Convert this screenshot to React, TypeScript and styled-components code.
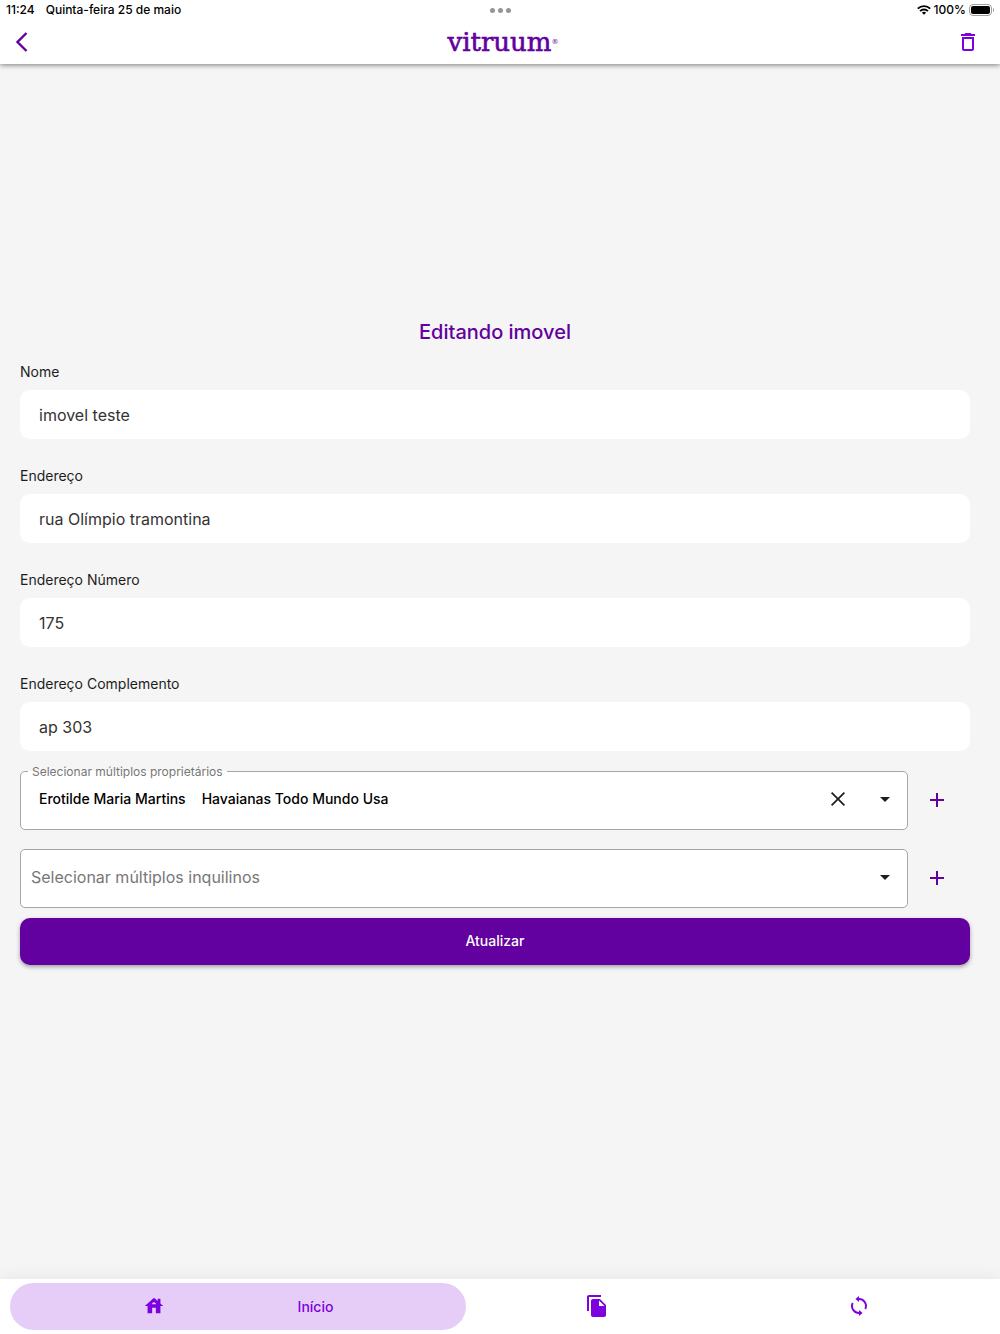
import React, { useState } from 'react';
import styled, { createGlobalStyle } from 'styled-components';

const purple = '#6200a0';
const violet = '#7d00de';

const Global = createGlobalStyle`
  *, *::before, *::after { box-sizing: border-box; }
  body { margin: 0; background: #f5f5f5; }
  body, button, input { font-family: Inter, "Liberation Sans", sans-serif; }
`;

const Page = styled.div`
  display: flex;
  flex-direction: column;
  min-height: 100vh;
  color: #1d1d1d;
`;

const Header = styled.header`
  background: #fff;
  box-shadow: 0 1px 5px rgba(0, 0, 0, 0.5);
`;

const StatusBar = styled.div`
  display: grid;
  grid-template-columns: 1fr auto 1fr;
  align-items: center;
  height: 20px;
  padding: 0 6px;
  font-size: 12px;
  font-weight: 500;
  line-height: 20px;
  color: #000;
`;

const StatusGroup = styled.div<{ $gap: number; $end?: boolean }>`
  display: flex;
  align-items: center;
  justify-content: ${(p) => (p.$end ? 'flex-end' : 'flex-start')};
  gap: ${(p) => p.$gap}px;
`;

const Dots = styled.div`
  display: flex;
  gap: 3px;
`;

const Dot = styled.span`
  width: 5px;
  height: 5px;
  border-radius: 50%;
  background: #969696;
`;

const Toolbar = styled.div`
  display: grid;
  grid-template-columns: 1fr auto 1fr;
  align-items: center;
  height: 44px;
  padding: 0 20px 0 10px;
`;

const IconButton = styled.button<{ $color?: string; $end?: boolean }>`
  display: flex;
  align-items: center;
  justify-content: center;
  justify-self: ${(p) => (p.$end ? 'end' : 'start')};
  width: 24px;
  height: 24px;
  padding: 0;
  border: 0;
  background: none;
  color: ${(p) => p.$color ?? purple};
  cursor: pointer;
`;

const Brand = styled.div`
  display: flex;
  align-items: center;
  padding-left: 16px;
  font-family: "DejaVu Serif", serif;
  font-size: 26px;
  line-height: 40px;
  color: ${purple};
  -webkit-text-stroke: 0.6px ${purple};
`;

const Registered = styled.span`
  font-size: 7px;
  line-height: 8px;
  -webkit-text-stroke: 0;
`;

const Main = styled.main`
  display: flex;
  flex: 1;
  flex-direction: column;
  justify-content: center;
  padding: 0 30px 59px 20px;
`;

const Form = styled.form`
  display: flex;
  flex-direction: column;
`;

const Title = styled.h1`
  margin: 0 0 18px;
  font-size: 20px;
  font-weight: 500;
  line-height: 24px;
  text-align: center;
  color: ${purple};
`;

const Fields = styled.div`
  display: flex;
  flex-direction: column;
  gap: 27px;
  margin-bottom: 20px;
`;

const Field = styled.div`
  display: flex;
  flex-direction: column;
  gap: 9px;
`;

const Label = styled.label`
  font-size: 14px;
  line-height: 19px;
`;

const TextInput = styled.input`
  width: 100%;
  height: 49px;
  padding: 1px 19px 0;
  border: 0;
  border-radius: 10px;
  background: #fff;
  font-size: 16px;
  color: #333;
  outline-color: ${purple};
`;

const Pickers = styled.div`
  display: flex;
  flex-direction: column;
  gap: 19px;
  margin-bottom: 10px;
`;

const PickerRow = styled.div`
  display: flex;
  align-items: center;
  gap: 17px;
  padding-right: 21px;
`;

const Picker = styled.div`
  position: relative;
  display: flex;
  flex: 1;
  align-items: center;
  gap: 35px;
  height: 59px;
  padding: 0 10px;
  border: 1px solid #a6a6a6;
  border-radius: 5px;
  background: #fff;
`;

const FloatingLabel = styled.span`
  position: absolute;
  top: -8px;
  left: 7px;
  padding: 0 4px;
  background: linear-gradient(#f5f5f5 7px, #fff 7px);
  font-size: 12px;
  line-height: 15px;
  color: #777;
`;

const Chosen = styled.div`
  display: flex;
  flex: 1;
  gap: 16px;
  padding: 0 8px 3px;
  font-size: 14px;
  font-weight: 500;
  line-height: 20px;
  color: #000;
`;

const Placeholder = styled.span`
  flex: 1;
  padding-bottom: 2px;
  font-size: 16px;
  line-height: 24px;
  color: #777;
`;

const PickerActions = styled.div`
  display: flex;
  gap: 23px;
  padding-bottom: 2px;
`;

const Submit = styled.button`
  height: 47px;
  padding-bottom: 3px;
  border: 0;
  border-radius: 10px;
  background: ${purple};
  box-shadow: 0 2px 4px rgba(0, 0, 0, 0.35);
  font-size: 14px;
  font-weight: 500;
  color: #fff;
  cursor: pointer;
`;

const BottomNav = styled.nav`
  display: grid;
  grid-template-columns: 456fr 262fr 262fr;
  height: 55px;
  padding: 4px 10px;
  background: #fff;
  box-shadow: 0 0 16px rgba(0, 0, 0, 0.08);
`;

const NavItem = styled.a<{ $active?: boolean }>`
  display: flex;
  align-items: center;
  justify-content: space-around;
  padding: 0 ${(p) => (p.$active ? 66 : 0)}px 1px;
  border-radius: 24px;
  background: ${(p) => (p.$active ? '#e6cdf8' : 'none')};
  font-size: 14px;
  font-weight: 500;
  color: ${violet};
  text-decoration: none;
`;

function Glyph({ d, size = 24 }: { d: string; size?: number }) {
  return (
    <svg width={size} height={size} viewBox="0 0 24 24" fill="currentColor" aria-hidden="true">
      <path d={d} />
    </svg>
  );
}

const icons = {
  trash: 'M6 19c0 1.1.9 2 2 2h8c1.1 0 2-.9 2-2V7H6v12zM8 9h8v10H8V9zm7.5-5l-1-1h-5l-1 1H5v2h14V4h-3.5z',
  plus: 'M19 13h-6v6h-2v-6H5v-2h6V5h2v6h6v2z',
  caret: 'M7 10l5 5 5-5z',
  house: 'M19 9.3V4h-3v2.6L12 3 2 12h3v8h5v-6h4v6h5v-8h3l-3-2.7zm-9 .7c0-1.1.9-2 2-2s2 .9 2 2h-4z',
  files: 'M16 1H4c-1.1 0-2 .9-2 2v14h2V3h12V1zm-1 4l6 6v10c0 1.1-.9 2-2 2H7.99C6.89 23 6 22.1 6 21l.01-14c0-1.1.89-2 1.99-2h7zm-1 7h5.5L14 6.5V12z',
};

function BackIcon() {
  return (
    <svg width="24" height="24" viewBox="0 0 24 24" fill="none" stroke="currentColor" strokeWidth="2.4" aria-hidden="true">
      <path d="M16.500 3 7.500 12 16.500 21" />
    </svg>
  );
}

function ClearIcon() {
  return (
    <svg width="24" height="24" viewBox="0 0 24 24" fill="none" stroke="currentColor" strokeWidth="1.7" aria-hidden="true">
      <path d="M5.600 5.600 18.400 18.400M18.400 5.600 5.600 18.400" />
    </svg>
  );
}

function SyncIcon() {
  return (
    <svg width="24" height="24" viewBox="0 0 24 24" fill="none" stroke="currentColor" strokeWidth="1.9" aria-hidden="true">
      <path d="M11 5.100A7 7 0 0 1 18.300 15M5.700 9A7 7 0 0 0 13 18.900" />
      <path d="M8.400 5.100 12 2.100v6zM15.600 18.900 12 15.900v6z" fill="currentColor" stroke="none" />
    </svg>
  );
}

function WifiIcon() {
  return (
    <svg width="14" height="10" viewBox="0 0 14 10" fill="none" stroke="#000" strokeWidth="1.9" aria-hidden="true">
      <path d="M.8 3.700a8.800 8.800 0 0 1 12.400 0M3.100 6.100a5.500 5.500 0 0 1 7.800 0" />
      <path d="M7 9.800 4.900 7.700a3 3 0 0 1 4.200 0z" fill="#000" stroke="none" />
    </svg>
  );
}

function BatteryIcon() {
  return (
    <svg width="25" height="12" viewBox="0 0 25 12" aria-hidden="true">
      <rect x=".5" y=".5" width="22" height="11" rx="3.500" fill="#fff" stroke="#a0a0a0" />
      <rect x="2" y="2" width="19" height="8" rx="2" fill="#000" />
      <path d="M24 4a2.200 2.200 0 0 1 0 4z" fill="#a0a0a0" />
    </svg>
  );
}

const fieldList = [
  { id: 'nome', label: 'Nome', value: 'imovel teste' },
  { id: 'endereco', label: 'Endereço', value: 'rua Olímpio tramontina' },
  { id: 'numero', label: 'Endereço Número', value: '175' },
  { id: 'complemento', label: 'Endereço Complemento', value: 'ap 303' },
];

export default function App() {
  const [owners, setOwners] = useState(['Erotilde Maria Martins', 'Havaianas Todo Mundo Usa']);

  return (
    <Page>
      <Global />
      <Header>
        <StatusBar>
          <StatusGroup $gap={11}>
            <span>11:24</span>
            <span>Quinta-feira 25 de maio</span>
          </StatusGroup>
          <Dots><Dot /><Dot /><Dot /></Dots>
          <StatusGroup $gap={3} $end>
            <WifiIcon />
            <span>100%</span>
            <BatteryIcon />
          </StatusGroup>
        </StatusBar>
        <Toolbar>
          <IconButton type="button" aria-label="Voltar"><BackIcon /></IconButton>
          <Brand>vitruum<Registered>®</Registered></Brand>
          <IconButton type="button" aria-label="Excluir" $color={violet} $end><Glyph d={icons.trash} /></IconButton>
        </Toolbar>
      </Header>

      <Main>
        <Form onSubmit={(e) => e.preventDefault()}>
          <Title>Editando imovel</Title>
          <Fields>
            {fieldList.map((f) => (
              <Field key={f.id}>
                <Label htmlFor={f.id}>{f.label}</Label>
                <TextInput id={f.id} defaultValue={f.value} />
              </Field>
            ))}
          </Fields>
          <Pickers>
            <PickerRow>
              <Picker role="group" aria-labelledby="owners-label">
                <FloatingLabel id="owners-label">Selecionar múltiplos proprietários</FloatingLabel>
                <Chosen>{owners.map((o) => <span key={o}>{o}</span>)}</Chosen>
                <PickerActions>
                  <IconButton type="button" aria-label="Limpar" $color="#1d1d1d" onClick={() => setOwners([])}><ClearIcon /></IconButton>
                  <IconButton type="button" aria-label="Abrir proprietários" $color="#1d1d1d"><Glyph d={icons.caret} /></IconButton>
                </PickerActions>
              </Picker>
              <IconButton type="button" aria-label="Adicionar proprietário"><Glyph d={icons.plus} /></IconButton>
            </PickerRow>
            <PickerRow>
              <Picker role="group" aria-labelledby="tenants-label">
                <Placeholder id="tenants-label">Selecionar múltiplos inquilinos</Placeholder>
                <PickerActions>
                  <IconButton type="button" aria-label="Abrir inquilinos" $color="#1d1d1d"><Glyph d={icons.caret} /></IconButton>
                </PickerActions>
              </Picker>
              <IconButton type="button" aria-label="Adicionar inquilino"><Glyph d={icons.plus} /></IconButton>
            </PickerRow>
          </Pickers>
          <Submit type="submit">Atualizar</Submit>
        </Form>
      </Main>

      <BottomNav>
        <NavItem href="#inicio" $active><Glyph d={icons.house} size={22} /><span>Início</span></NavItem>
        <NavItem href="#documentos" aria-label="Documentos"><Glyph d={icons.files} /></NavItem>
        <NavItem href="#sincronizar" aria-label="Sincronizar"><SyncIcon /></NavItem>
      </BottomNav>
    </Page>
  );
}
